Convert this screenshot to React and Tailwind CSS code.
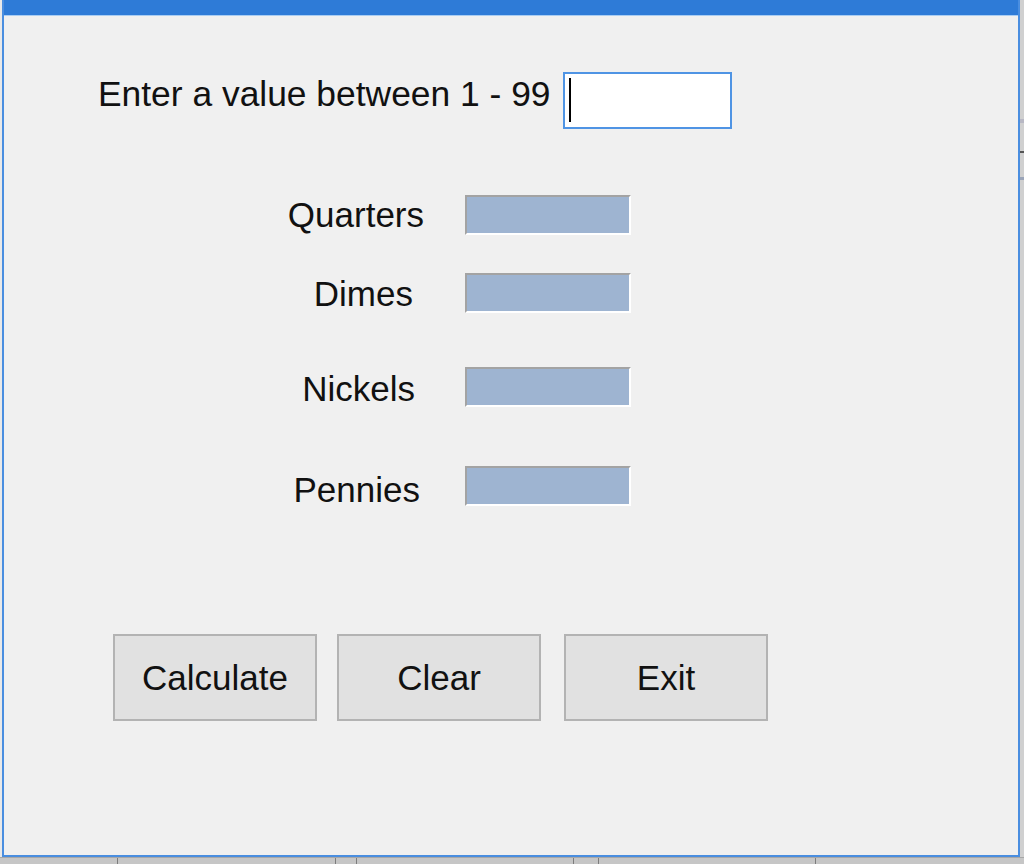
export default function App() {
  const font = { fontFamily: '"Liberation Sans", Arial, sans-serif' };
  const rows = [
    { label: "Quarters", pr: "pr-[41px]", mt: "mt-0", gap: "mt-[66px]" },
    { label: "Dimes", pr: "pr-[52px]", mt: "mt-[1px]", gap: "mt-[38px]" },
    { label: "Nickels", pr: "pr-[50px]", mt: "mt-[2px]", gap: "mt-[54px]" },
    { label: "Pennies", pr: "pr-[45px]", mt: "mt-[4px]", gap: "mt-[59px]" },
  ];
  return (
    <div className="w-[1024px] h-[864px] bg-[#c8c8c8] flex flex-col overflow-hidden" style={font}>
      <div className="flex h-[857px]">
        <div className="w-[2px] h-full bg-[#e9e9e9]" />
        <div className="w-[1018px] h-full border-x-2 border-b-2 border-[#4a8ee0] bg-[#f0f0f0] flex flex-col">
          <div className="h-[15px] bg-[#2e7bd7] shrink-0" />
          <div className="h-px bg-[#a9cdf3] shrink-0" />
          <div className="flex flex-col text-[35px] text-[#111] flex-1">
            {/* Input row */}
            <div className="flex items-start pl-[94px] mt-[56px] h-[57px]">
              <div className="text-[35.4px] leading-[40px] mt-[2px] whitespace-nowrap">Enter a value between 1 - 99</div>
              <div className="ml-[12px] w-[169px] h-[57px] border-2 border-[#4f94e4] bg-white flex items-start">
                <div className="ml-[4px] mt-[4px] w-[2px] h-[44px] bg-black" />
              </div>
            </div>
            {/* Output rows */}
            {rows.map((r) => (
              <div key={r.label} className={`flex items-start h-[40px] ${r.gap}`}>
                <div className={`w-[461px] text-right leading-[40px] ${r.pr} ${r.mt}`}>{r.label}</div>
                <div className="w-[166px] h-[40px] bg-[#9eb4d1] border-2 border-t-[#a3a3a3] border-l-[#a3a3a3] border-b-white border-r-white" />
              </div>
            ))}
            {/* Buttons */}
            <div className="flex pl-[109px] mt-[128px]">
              <button className="w-[204px] h-[87px] bg-[#e1e1e1] border-2 border-[#b3b3b3] text-[35px] text-[#111] leading-none flex items-center justify-center">Calculate</button>
              <button className="ml-[20px] w-[204px] h-[87px] bg-[#e1e1e1] border-2 border-[#b3b3b3] text-[35px] text-[#111] leading-none flex items-center justify-center">Clear</button>
              <button className="ml-[23px] w-[204px] h-[87px] bg-[#e1e1e1] border-2 border-[#b3b3b3] text-[35px] text-[#111] leading-none flex items-center justify-center">Exit</button>
            </div>
          </div>
        </div>
        <div className="flex-1 h-full bg-[#d0d0d0] flex flex-col">
          <div className="h-[119px]" />
          <div className="h-[4px] bg-[#b8b8c4]" />
          <div className="h-[28px]" />
          <div className="h-[2px] bg-[#555]" />
          <div className="h-[24px]" />
          <div className="h-[3px] bg-[#9aa4b8]" />
        </div>
      </div>
      <div className="flex h-[7px] bg-[#c6c6c6] border-t border-[#a7a7a7]">
        <div className="w-[117px]" />
        <div className="w-[218px] border-l border-[#7d7d7d]" />
        <div className="w-[21px] border-l border-[#7d7d7d]" />
        <div className="w-[217px] border-l border-[#7d7d7d]" />
        <div className="w-[25px] border-l border-[#7d7d7d]" />
        <div className="w-[217px] border-l border-[#7d7d7d]" />
        <div className="flex-1 border-l border-[#7d7d7d]" />
      </div>
    </div>
  );
}
